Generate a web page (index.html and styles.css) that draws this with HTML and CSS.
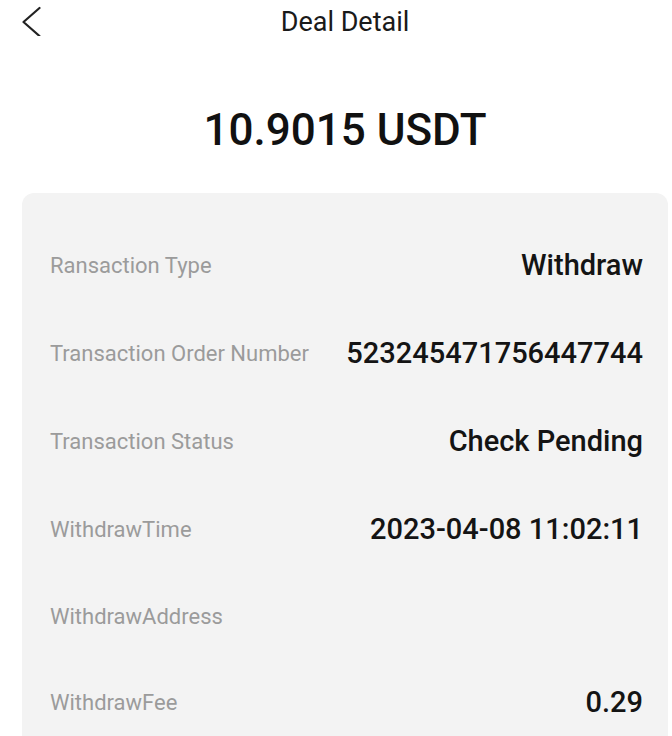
FILE: index.html
```html
<!DOCTYPE html>
<html lang="en">
<head>
<meta charset="utf-8">
<title>Deal Detail</title>
<link rel="stylesheet" href="styles.css">
</head>
<body>
<div class="page">
  <header class="topbar">
    <span class="back" aria-label="Back">
      <svg width="24" height="36" viewBox="0 0 24 36"><polyline points="17.5,8 1.5,22 17.5,36" fill="none" stroke="#222" stroke-width="2.2" stroke-linecap="round" stroke-linejoin="round"/></svg>
    </span>
    <h1 class="title">Deal Detail</h1>
  </header>
  <div class="amount">10.9015 USDT</div>
  <section class="card">
    <div class="row"><span class="label">Ransaction Type</span><span class="value">Withdraw</span></div>
    <div class="row"><span class="label">Transaction Order Number</span><span class="value">523245471756447744</span></div>
    <div class="row"><span class="label">Transaction Status</span><span class="value">Check Pending</span></div>
    <div class="row"><span class="label">WithdrawTime</span><span class="value">2023-04-08 11:02:11</span></div>
    <div class="row"><span class="label">WithdrawAddress</span><span class="value"></span></div>
    <div class="row"><span class="label">WithdrawFee</span><span class="value">0.29</span></div>
  </section>
</div>
</body>
</html>
```
FILE: styles.css
```css
html, body {
  margin: 0;
  padding: 0;
  background: #ffffff;
}
body {
  font-family: Roboto, "Noto Sans", "Liberation Sans", sans-serif;
  color: #151515;
  overflow: hidden;
}
.page {
  padding: 0 4px 0 22px;
  display: flex;
  flex-direction: column;
}
.topbar {
  position: relative;
  height: 44px;
  display: flex;
  align-items: center;
  justify-content: center;
}
.back {
  position: absolute;
  left: 0;
  top: 0;
  width: 24px;
  height: 44px;
}
.back svg {
  display: block;
}
.title {
  margin: 0;
  font-size: 27px;
  font-weight: 400;
  color: #1a1a1a;
  line-height: 44px;
}
.amount {
  margin-top: 60px;
  height: 52px;
  line-height: 52px;
  text-align: center;
  font-size: 44px;
  font-weight: 500;
  color: #111;
}
.card {
  margin-top: 37px;
  background: #f3f3f3;
  border-radius: 12px 12px 0 0;
  padding: 28px 25px 0 28px;
  display: flex;
  flex-direction: column;
}
.row {
  height: 88px;
  display: flex;
  align-items: center;
  justify-content: space-between;
}
.row:nth-child(5), .row:nth-child(6) {
  height: 86px;
}
.label {
  font-size: 22px;
  color: #9b9b9b;
}
.value {
  font-size: 29px;
  font-weight: 500;
  color: #141414;
}
```
